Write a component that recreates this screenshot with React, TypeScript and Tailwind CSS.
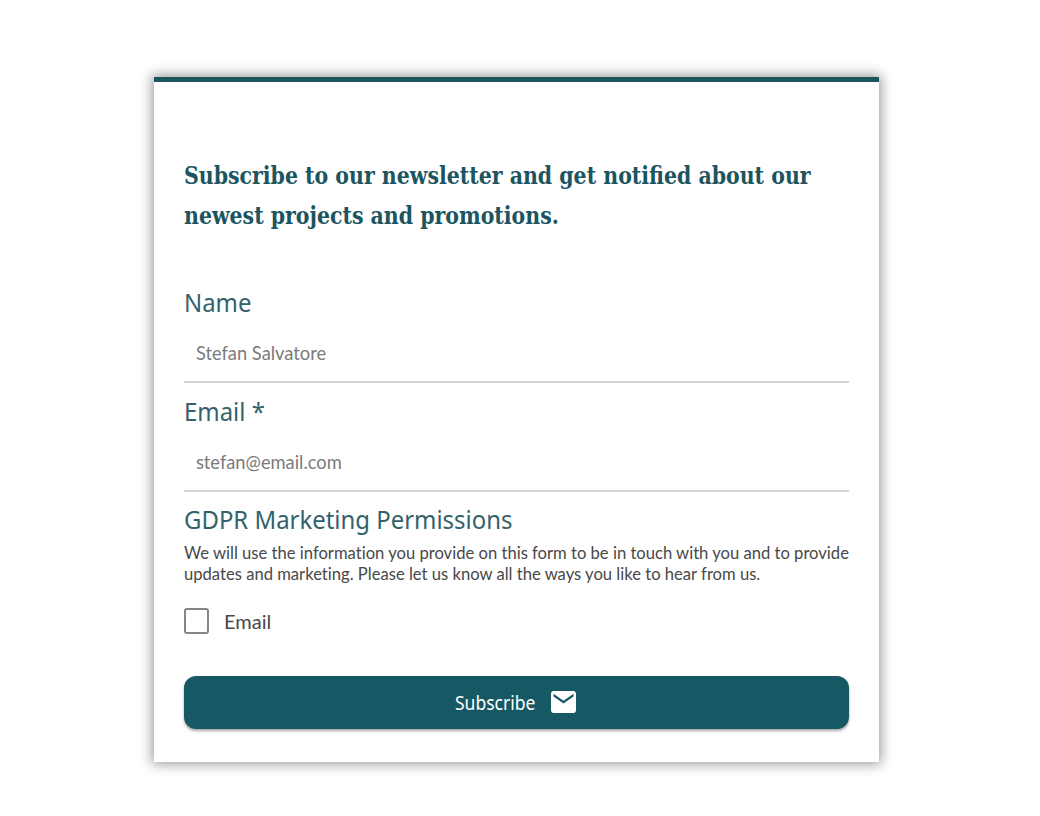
import React, { useState } from 'react';

interface FieldProps {
  id: string;
  label: string;
  type: string;
  placeholder: string;
}

const MailIcon: React.FC = () => (
  <svg viewBox="2 4 20 16" preserveAspectRatio="none" className="block w-[25px] h-[22px] fill-white" aria-hidden="true">
    <path d="M20 4H4c-1.1 0-1.99.9-1.99 2L2 18c0 1.1.9 2 2 2h16c1.1 0 2-.9 2-2V6c0-1.1-.9-2-2-2zm0 4l-8 5-8-5V6l8 5 8-5v2z" />
  </svg>
);

const Field: React.FC<FieldProps> = ({ id, label, type, placeholder }) => (
  <div className="h-[108.5px] flex flex-col">
    <label htmlFor={id} className="block h-[39px] leading-[37px]">
      <span className="inline-block origin-left scale-x-[0.92] whitespace-nowrap font-['Noto_Sans','Open_Sans',sans-serif] text-[26px] text-[#34626b]">
        {label}
      </span>
    </label>
    <div className="h-[60px] border-b-2 border-[#d3d3d3]">
      <input
        id={id}
        type={type}
        placeholder={placeholder}
        className="w-[109%] h-[58px] pl-[13px] origin-left scale-x-[0.915] bg-transparent outline-none [font-variant-ligatures:none] font-['Lato',sans-serif] text-[20px] text-[#444] placeholder:text-[#7b7b7b]"
      />
    </div>
  </div>
);

const App: React.FC = () => {
  const [optIn, setOptIn] = useState(false);

  return (
    <div className="min-h-screen bg-white pt-[77px] pl-[154px]">
      <form
        onSubmit={(e) => e.preventDefault()}
        className="w-[725px] h-[685px] border-t-[5px] border-[#1a545c] bg-white px-[30px] pt-[74px] shadow-[0_0_12px_2px_rgba(0,0,0,0.4)]"
      >
        <h1 className="h-[80px] origin-left scale-x-[0.911] font-['DejaVu_Serif_Condensed','DejaVu_Serif',serif] text-[25px] leading-[40px] font-bold text-[#1c5560]">
          <span className="block whitespace-nowrap">Subscribe to our newsletter and get notified about our</span>
          <span className="block whitespace-nowrap">newest projects and promotions.</span>
        </h1>

        <div className="mt-[48px]">
          <Field id="name" label="Name" type="text" placeholder="Stefan Salvatore" />
          <Field id="email" label="Email *" type="email" placeholder="stefan@email.com" />
        </div>

        <h2 className="h-[38px] leading-[37px]">
          <span className="inline-block origin-left scale-x-[0.92] whitespace-nowrap font-['Noto_Sans','Open_Sans',sans-serif] text-[26px] text-[#34626b]">
            GDPR Marketing Permissions
          </span>
        </h2>
        <p className="mt-[3px] origin-left scale-x-[0.949] [font-variant-ligatures:none] font-['Lato',sans-serif] text-[17.5px] leading-[21px] text-[#484848]">
          <span className="block whitespace-nowrap">We will use the information you provide on this form to be in touch with you and to provide</span>
          <span className="block whitespace-nowrap">updates and marketing. Please let us know all the ways you like to hear from us.</span>
        </p>

        <label className="mt-[24px] flex h-[26px] items-center">
          <input
            type="checkbox"
            checked={optIn}
            onChange={(e) => setOptIn(e.target.checked)}
            className="appearance-none w-[25px] h-[26px] rounded-[3px] border-2 border-[#858585] bg-white checked:bg-[#165964]"
          />
          <span className="ml-[15px] font-['Lato',sans-serif] text-[20px] text-[#484848]">Email</span>
        </label>

        <button
          type="submit"
          className="mt-[42px] flex w-full h-[53px] items-center rounded-xl bg-[#165964] pl-[271px] text-white shadow-[0_2px_3px_rgba(0,0,0,0.35)]"
        >
          <span className="w-[96px] origin-left scale-x-[0.875] text-left font-['Noto_Sans','Open_Sans',sans-serif] text-[20px]">Subscribe</span>
          <span className="mb-[2px]">
            <MailIcon />
          </span>
        </button>
      </form>
    </div>
  );
};

export default App;
